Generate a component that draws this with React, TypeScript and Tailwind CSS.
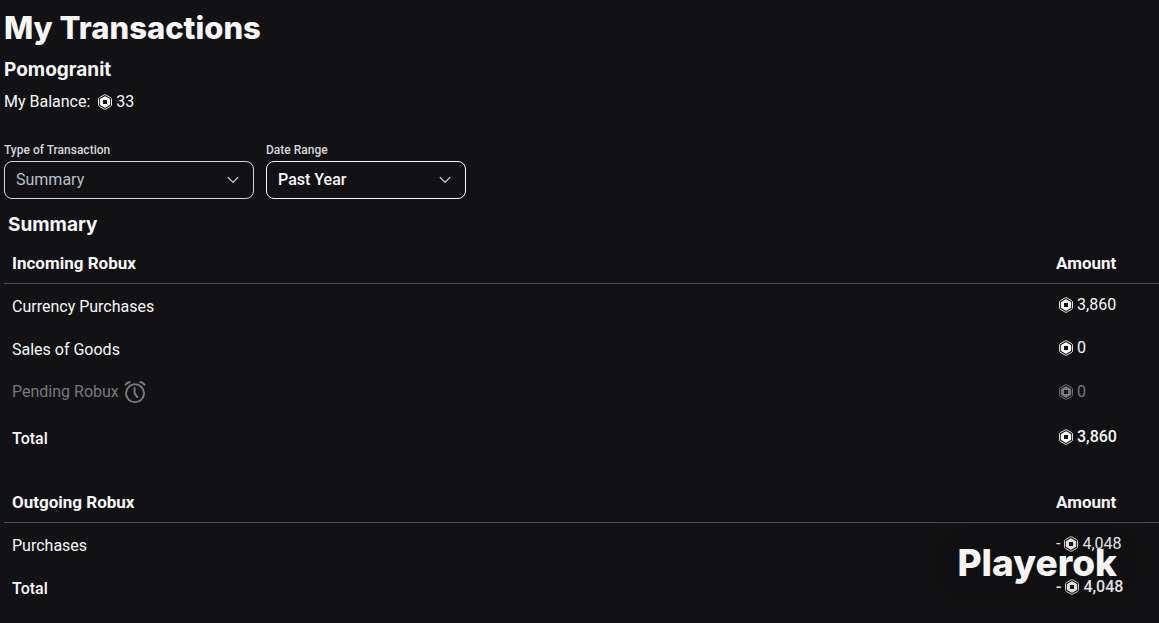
import type { ReactNode } from "react";

type Entry = {
  label: string;
  amount: string;
  negative?: boolean;
  pending?: boolean;
  total?: boolean;
};

const incoming: Entry[] = [
  { label: "Currency Purchases", amount: "3,860" },
  { label: "Sales of Goods", amount: "0" },
  { label: "Pending Robux", amount: "0", pending: true },
  { label: "Total", amount: "3,860", total: true },
];

const outgoing: Entry[] = [
  { label: "Purchases", amount: "4,048", negative: true },
  { label: "Total", amount: "4,048", negative: true, total: true },
];

function RobuxIcon() {
  return (
    <svg viewBox="0 0 16 16" className="size-4 shrink-0" aria-hidden="true">
      <path
        d="M7.200.9a1.600 1.600 0 0 1 1.600 0l4.900 2.800a1.600 1.600 0 0 1 .8 1.400v5.800a1.600 1.600 0 0 1-.8 1.400l-4.900 2.800a1.600 1.600 0 0 1-1.600 0l-4.900-2.800a1.600 1.600 0 0 1-.8-1.400V5.100a1.600 1.600 0 0 1 .8-1.400z"
        fill="none"
        stroke="currentColor"
        strokeWidth="0.900"
      />
      <path
        fill="currentColor"
        fillRule="evenodd"
        d="M7.300 2.500a1.400 1.400 0 0 1 1.400 0l3.800 2.200a1.400 1.400 0 0 1 .7 1.200v4.200a1.400 1.400 0 0 1-.7 1.200l-3.800 2.200a1.400 1.400 0 0 1-1.400 0l-3.800-2.200a1.400 1.400 0 0 1-.7-1.200V5.900a1.400 1.400 0 0 1 .7-1.200zM6 6v4h4V6z"
      />
    </svg>
  );
}

function ClockIcon() {
  return (
    <svg
      viewBox="0 0 24 24"
      className="size-6 shrink-0"
      fill="none"
      stroke="currentColor"
      strokeWidth="2"
      strokeLinecap="round"
      strokeLinejoin="round"
      aria-hidden="true"
    >
      <circle cx="12" cy="13.300" r="9" />
      <path d="M11.600 8v5.600l2.800 3.400M2.600 4.600C3.600 3.200 5 2.300 6.800 2M21.400 4.600C20.400 3.200 19 2.300 17.200 2" />
    </svg>
  );
}

function Chevron() {
  return (
    <svg
      viewBox="0 0 12 8"
      className="pointer-events-none absolute top-[15px] right-[15px] h-2 w-3 text-[#c8c9cc]"
      fill="none"
      stroke="currentColor"
      strokeWidth="1.200"
      strokeLinecap="round"
      strokeLinejoin="round"
      aria-hidden="true"
    >
      <path d="M1.200 1.500l4.800 4.800 4.800-4.800" />
    </svg>
  );
}

function Filter({ id, label, className, children }: { id: string; label: string; className: string; children: ReactNode }) {
  return (
    <div className={className}>
      <label htmlFor={id} className="block text-xs leading-4 font-medium text-[#d5d7dd]">
        {label}
      </label>
      <div className="relative mt-[3px]">
        {children}
        <Chevron />
      </div>
    </div>
  );
}

function SummaryTable({ title, entries }: { title: string; entries: Entry[] }) {
  return (
    <table className="w-full table-fixed border-collapse text-left">
      <colgroup>
        <col />
        <col className="w-[111px]" />
      </colgroup>
      <thead>
        <tr className="h-10 border-b border-[#4b4c51] text-[17px] font-bold">
          <th scope="col" className="px-2">{title}</th>
          <th scope="col" className="px-2">Amount</th>
        </tr>
      </thead>
      <tbody>
        {entries.map((e) => (
          <tr
            key={e.label}
            className={e.pending ? "h-[46px] text-[#77787b]" : e.total ? "h-[43px] font-medium" : "h-[43px]"}
          >
            <td className={e.pending ? "px-2" : "px-2 pt-1"}>
              <span className="flex items-center gap-1">
                {e.label}
                {e.pending && <ClockIcon />}
              </span>
            </td>
            <td className="px-2">
              <span className={e.negative ? "flex items-center gap-[3px]" : "flex items-center gap-[3px] pl-0.5"}>
                {e.negative && <span>-</span>}
                <RobuxIcon />
                {e.amount}
              </span>
            </td>
          </tr>
        ))}
      </tbody>
    </table>
  );
}

export default function App() {
  return (
    <main className="relative min-h-screen overflow-hidden bg-[#121214] pl-1 font-['Roboto',sans-serif] text-base leading-6 text-[#f7f7f8]">
      <h1 className="pt-2 font-['Inter',sans-serif] text-[31px] leading-10 font-extrabold">My Transactions</h1>
      <h2 className="mt-2 font-['Inter',sans-serif] text-[19px] leading-7 font-bold">Pomogranit</h2>
      <p className="mt-1.5 flex items-center gap-[3px]">
        <span className="pr-1">My Balance:</span>
        <RobuxIcon />
        33
      </p>

      <form className="mt-7 flex gap-3">
        <Filter id="type" label="Type of Transaction" className="w-[250px]">
          <select id="type" className="h-[38px] w-full appearance-none rounded-lg border border-[#d5d7dd] bg-transparent px-[11px] text-[#bcbec8]">
            <option>Summary</option>
          </select>
        </Filter>
        <Filter id="range" label="Date Range" className="w-[200px]">
          <select id="range" className="h-[38px] w-full appearance-none rounded-lg border border-[#f7f7f8] bg-transparent px-[11px] font-medium">
            <option>Past Year</option>
          </select>
        </Filter>
      </form>

      <h2 className="mt-3 pl-1 font-['Inter',sans-serif] text-[19px] leading-7 font-bold">Summary</h2>
      <div className="mt-1 flex flex-col gap-6">
        <SummaryTable title="Incoming Robux" entries={incoming} />
        <SummaryTable title="Outgoing Robux" entries={outgoing} />
      </div>

      <div className="pointer-events-none absolute right-[42px] bottom-9 font-['Inter',sans-serif] text-[37px] leading-12 font-extrabold text-[#f5f5f5]">
        <div className="absolute -inset-x-6 -inset-y-4 rounded-3xl bg-black/10 blur-lg" />
        <span className="relative">Playerok</span>
      </div>
    </main>
  );
}
